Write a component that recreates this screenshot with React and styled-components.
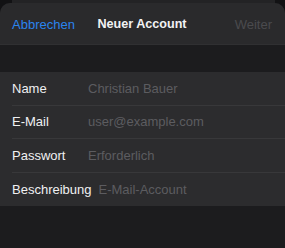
import React from 'react'
import styled, { createGlobalStyle } from 'styled-components'

const GlobalStyle = createGlobalStyle`
   html, body {
      margin: 0;
      padding: 0;
      background: #121214;
      font-family: 'Liberation Sans', Arial, sans-serif;
      -webkit-font-smoothing: antialiased;
   }
`

const fields = [
   { label: 'Name', placeholder: 'Christian Bauer' },
   { label: 'E-Mail', placeholder: 'user@example.com' },
   { label: 'Passwort', placeholder: 'Erforderlich' },
   { label: 'Beschreibung', placeholder: 'E-Mail-Account' },
]

const App = () => {
   return (
      <Screen>
         <GlobalStyle />
         <BackCard />
         <Sheet>
            <NavBar>
               <NavButton>Abbrechen</NavButton>
               <NavTitle>Neuer Account</NavTitle>
               <NavButton disabled>Weiter</NavButton>
            </NavBar>
            <Group>
               {fields.map((f, i) => (
                  <Row key={f.label} $last={i === fields.length - 1}>
                     <Label>{f.label}</Label>
                     <Input placeholder={f.placeholder} />
                  </Row>
               ))}
            </Group>
         </Sheet>
      </Screen>
   )
}

const Screen = styled.div`
   width: 285px;
   height: 248px;
   display: flex;
   flex-direction: column;
   overflow: hidden;
`

const BackCard = styled.div`
   height: 3px;
   margin: 0 10px 0 12px;
   background: #232325;
`

const Sheet = styled.div`
   flex: 1;
   background: #1c1c1e;
   border-radius: 10px 10px 0 0;
   overflow: hidden;
`

const NavBar = styled.div`
   height: 42px;
   display: grid;
   grid-template-columns: 1fr auto 1fr;
   align-items: center;
   padding: 1px 13px 0 12px;
   box-sizing: border-box;
   background: #2a2a2c;
   border-bottom: 0.5px solid #303032;
   & > :last-child {
      justify-self: end;
   }
`

const NavButton = styled.button`
   border: none;
   background: none;
   padding: 0;
   font: 13px 'Liberation Sans', Arial, sans-serif;
   color: ${(p) => (p.disabled ? '#4b4b4e' : '#2a84ee')};
   justify-self: start;
`

const NavTitle = styled.div`
   font-size: 12.6px;
   font-weight: bold;
   color: #f2f2f4;
`

const Group = styled.div`
   margin-top: 27px;
   background: #2c2c2e;
   padding-left: 12px;
`

const Row = styled.div`
   height: 33.5px;
   display: flex;
   align-items: center;
   gap: 7px;
   border-bottom: ${(p) => (p.$last ? 'none' : '1px solid #38383a')};
   box-sizing: border-box;
`

const Label = styled.span`
   min-width: 69px;
   font-size: 13px;
   color: #f0f0f2;
`

const Input = styled.input`
   flex: 1;
   min-width: 0;
   border: none;
   background: none;
   outline: none;
   padding: 0;
   font: 13px 'Liberation Sans', Arial, sans-serif;
   color: #fff;
   &::placeholder {
      color: #5c5c60;
   }
`

export default App
